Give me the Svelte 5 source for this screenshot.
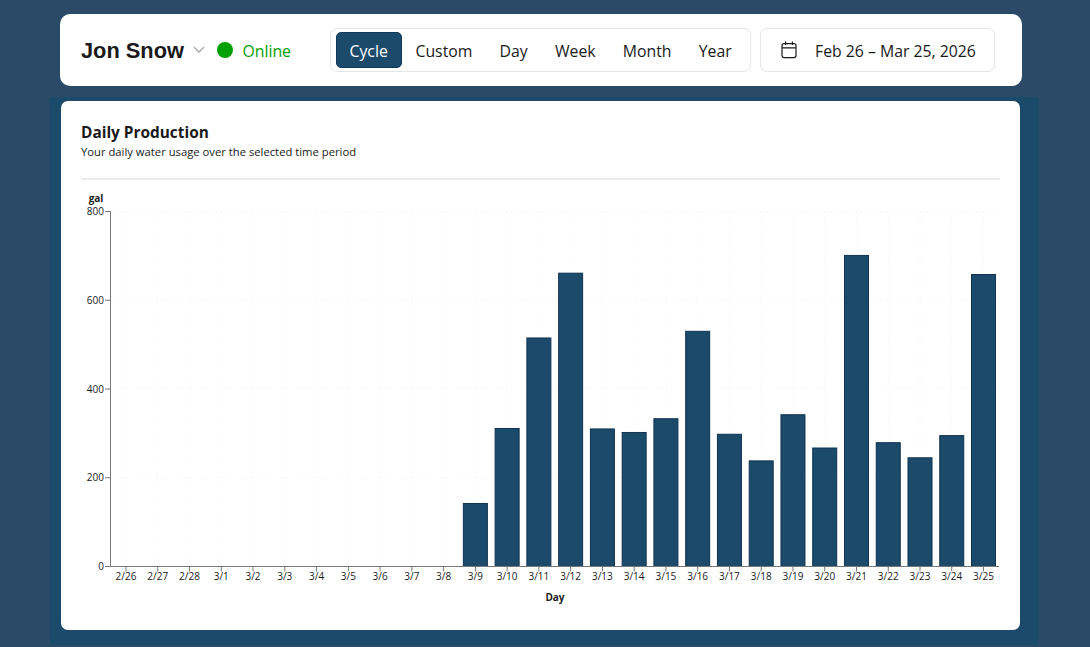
<script>
  const labels = ['2/26','2/27','2/28','3/1','3/2','3/3','3/4','3/5','3/6','3/7','3/8','3/9','3/10','3/11','3/12','3/13','3/14','3/15','3/16','3/17','3/18','3/19','3/20','3/21','3/22','3/23','3/24','3/25'];
  const values = [0,0,0,0,0,0,0,0,0,0,0,142,311,515,661,310,302,333,530,298,238,342,267,701,279,245,295,658];
  const tabs = ['Cycle','Custom','Day','Week','Month','Year'];
  const x0 = 126, step = 31.76, yBase = 566.5, yTop = 211.5;
  const xAt = (i) => x0 + step * i;
  const yAt = (v) => yBase - (v / 800) * (yBase - yTop);
  const yTicks = [0,200,400,600,800];
</script>

<div class="page">
  <header class="topbar">
    <div class="identity">
      <span class="name">Jon Snow</span>
      <svg class="chev" width="12" height="8" viewBox="0 0 12 8"><path d="M1 1.2 L6 6.2 L11 1.2" fill="none" stroke="#9a9a9a" stroke-width="1.2"/></svg>
      <span class="dot"></span>
      <span class="status">Online</span>
    </div>
    <div class="tabs">
      {#each tabs as t, i}
        <button class="tab" class:active={i === 0}>{t}</button>
      {/each}
    </div>
    <div class="range">
      <svg width="16" height="18" viewBox="0 0 16 18" fill="none" stroke="#1a1a1a" stroke-width="1.2">
        <rect x="1" y="2.6" width="14" height="14" rx="2"/>
        <path d="M1 6.8 H15 M4.6 .6 V4 M11.4 .6 V4"/>
      </svg>
      <span>Feb 26 – Mar 25, 2026</span>
    </div>
  </header>

  <section class="panel">
    <div class="card">
      <h2>Daily Production</h2>
      <p>Your daily water usage over the selected time period</p>
      <hr />
      <svg class="chart" width="959" height="445" viewBox="61 190 959 445">
        {#each yTicks as v}
          {#if v > 0}
            <line x1="110.5" x2="999" y1={yAt(v)} y2={yAt(v)} class="grid" />
          {/if}
        {/each}
        {#each labels as l, i}
          <line x1={xAt(i)} x2={xAt(i)} y1={yTop} y2={yBase} class="grid" />
        {/each}
        {#each values as v, i}
          {#if v > 0}
            <rect x={xAt(i) - 12} y={yAt(v)} width="24" height={yBase - yAt(v)} class="bar" />
          {/if}
        {/each}
        <line x1="110.5" x2="110.5" y1={yTop} y2={yBase} class="axis" />
        <line x1="110.5" x2="999" y1={yBase} y2={yBase} class="axis" />
        {#each yTicks as v}
          <line x1="105" x2="110.5" y1={yAt(v)} y2={yAt(v)} class="axis" />
          <text x="104" y={yAt(v) + 3.6} text-anchor="end" class="tick">{v}</text>
        {/each}
        {#each labels as l, i}
          <line x1={xAt(i)} x2={xAt(i)} y1={yBase} y2={yBase + 5} class="axis" />
          <text x={xAt(i)} y="580" text-anchor="middle" class="tick">{l}</text>
        {/each}
        <text x="96" y="202" text-anchor="middle" class="label">gal</text>
        <text x="555" y="601" text-anchor="middle" class="label">Day</text>
      </svg>
    </div>
  </section>
</div>

<style>
  :global(body) {
    margin: 0;
    background: #2a4a68;
    font-family: "Open Sans", "Noto Sans", sans-serif;
    color: #1a1a1a;
    overflow: hidden;
  }
  .page {
    width: 1090px;
    height: 647px;
    padding-top: 14px;
    box-sizing: border-box;
  }
  .topbar {
    margin-left: 60px;
    width: 962px;
    height: 72px;
    box-sizing: border-box;
    background: #fff;
    border-radius: 10px;
    display: flex;
    align-items: center;
    padding-left: 21px;
  }
  .identity {
    display: flex;
    align-items: center;
    width: 249px;
  }
  .name {
    font-family: "Liberation Sans", Arial, sans-serif;
    font-weight: 700;
    font-size: 21.8px;
    padding-top: 1px;
  }
  .chev { margin-left: 9px; }
  .dot {
    width: 16px;
    height: 16px;
    border-radius: 50%;
    background: #00a000;
    margin-left: 12.5px;
  }
  .status {
    color: #00a000;
    font-size: 15.8px;
    margin-left: 9px;
    padding-top: 1px;
  }
  .tabs {
    width: 421px;
    height: 44px;
    box-sizing: border-box;
    border: 1.5px solid #e6e6e6;
    border-radius: 7px;
    display: flex;
    align-items: center;
    gap: 1.2px;
    padding-left: 4.5px;
  }
  .tab {
    font: inherit;
    font-size: 15.8px;
    color: #1a1a1a;
    background: none;
    border: none;
    height: 36px;
    padding: 2px 13px 0;
    border-radius: 5px;
    cursor: pointer;
  }
  .tab.active {
    background: #1c4a6b;
    color: #fff;
    border: 1px solid #12395a;
    margin-right: -0.5px;
  }
  .range {
    margin-left: 9px;
    width: 235px;
    height: 44px;
    box-sizing: border-box;
    border: 1.5px solid #e6e6e6;
    border-radius: 7px;
    display: flex;
    align-items: center;
    padding-left: 19.5px;
    gap: 18.5px;
    font-size: 15.8px;
  }
  .range span { padding-top: 1px; }
  .panel {
    margin: 11px 0 0 50px;
    width: 989px;
    height: 548px;
    box-sizing: border-box;
    background: #1c4a6b;
    padding: 4px 0 0 11px;
  }
  .card {
    width: 959px;
    height: 529px;
    box-sizing: border-box;
    background: #fff;
    border-radius: 7px;
    padding: 21px 20px 0 20px;
    position: relative;
  }
  h2 {
    margin: 0;
    font-size: 15.4px;
    line-height: 22px;
    font-weight: 700;
  }
  p {
    margin: 0;
    font-size: 11.25px;
    line-height: 16px;
  }
  hr {
    margin: 18px 0 0;
    border: none;
    height: 2px;
    background: #ebebeb;
  }
  .chart {
    position: absolute;
    left: 0;
    top: 89px;
    display: block;
  }
  .grid {
    stroke: #f7f7f7;
    stroke-width: 1;
    stroke-dasharray: 2 3;
  }
  .bar {
    fill: #1c4a6b;
    stroke: #0f3350;
    stroke-width: 1;
  }
  .axis {
    stroke: #777;
    stroke-width: 1;
  }
  .tick {
    font-size: 10px;
    fill: #1a1a1a;
  }
  .label {
    font-size: 10px;
    font-weight: 700;
    fill: #1a1a1a;
  }
</style>
